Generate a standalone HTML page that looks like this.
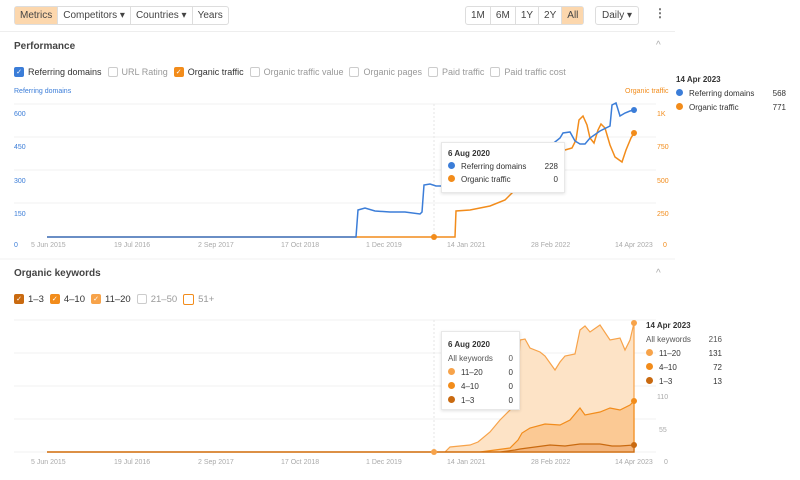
<!DOCTYPE html>
<html><head><meta charset="utf-8"><style>
*{margin:0;padding:0;box-sizing:border-box}
body{width:800px;height:480px;background:#fff;font-family:"Liberation Sans",Arial,sans-serif;color:#333;position:relative;overflow:hidden}
.a{position:absolute;white-space:nowrap}
.btns{display:flex;border:1px solid #ddd;border-radius:3px;height:19px;font-size:10px;color:#444}
.btns div{padding:0 5px;line-height:17px;border-right:1px solid #ddd}
.btns div:last-child{border-right:none}
.on{background:#fcd7ad}
.chk{display:flex;align-items:center;font-size:9px;height:12px}
.chk span{display:flex;align-items:center;margin-right:6px}
.cb{display:block;width:10px;height:10px;border:1px solid #ccc;border-radius:2px;margin-right:4px;font-style:normal;color:#fff;font-size:7px;line-height:9px;text-align:center;overflow:hidden}
.g{color:#999}
.dot{display:inline-block;width:7px;height:7px;border-radius:50%;margin-right:6px}
</style></head><body>
<div class="a btns" style="left:14px;top:6px"><div class="on">Metrics</div><div>Competitors ▾</div><div>Countries ▾</div><div>Years</div></div>
<div class="a btns" style="left:465px;top:6px"><div>1M</div><div>6M</div><div>1Y</div><div>2Y</div><div class="on">All</div></div>
<div class="a btns" style="left:595px;top:6px"><div style="padding:0 6px">Daily ▾</div></div>
<div class="a" style="left:654px;top:6px;font-size:12px;color:#666;font-weight:bold">⋮</div>
<div class="a" style="left:0;top:31px;width:675px;height:1px;background:#eee"></div>
<div class="a" style="left:14px;top:41px;font-size:10px;font-weight:bold;color:#444">Performance</div>
<div class="a" style="left:656px;top:40px;font-size:10px;color:#aaa">^</div>
<div class="a chk" style="left:14px;top:66px">
<span><i class="cb" style="background:#3b7dd8;border-color:#3b7dd8">✓</i>Referring domains</span>
<span class="g"><i class="cb"></i>URL Rating</span>
<span><i class="cb" style="background:#f28c1b;border-color:#f28c1b">✓</i>Organic traffic</span>
<span class="g"><i class="cb"></i>Organic traffic value</span>
<span class="g"><i class="cb"></i>Organic pages</span>
<span class="g"><i class="cb"></i>Paid traffic</span>
<span class="g"><i class="cb"></i>Paid traffic cost</span></div>
<div class="a" style="left:14px;top:88px;font-size:7px;color:#3b7dd8">Referring domains</div>
<div class="a" style="left:625px;top:88px;font-size:7px;color:#f28c1b">Organic traffic</div>

<svg class="a" style="left:0;top:0" width="800" height="480">
<g stroke="#f0f0f0" stroke-width="1">
<line x1="14" y1="104" x2="656" y2="104"/><line x1="14" y1="137" x2="656" y2="137"/><line x1="14" y1="170" x2="656" y2="170"/><line x1="14" y1="203" x2="656" y2="203"/>
<line x1="14" y1="320" x2="656" y2="320"/><line x1="14" y1="353" x2="656" y2="353"/><line x1="14" y1="386" x2="656" y2="386"/><line x1="14" y1="419" x2="656" y2="419"/><line x1="14" y1="452" x2="656" y2="452"/>
<line x1="0" y1="259" x2="675" y2="259"/>
</g>
<line x1="434" y1="104" x2="434" y2="237" stroke="#e6e6e6" stroke-dasharray="2,2"/>
<line x1="434" y1="320" x2="434" y2="452" stroke="#e6e6e6" stroke-dasharray="2,2"/>
<g font-size="7" fill="#3b7dd8"><text x="14" y="116">600</text><text x="14" y="149">450</text><text x="14" y="183">300</text><text x="14" y="216">150</text><text x="14" y="247">0</text></g>
<g font-size="7" fill="#f28c1b"><text x="657" y="116">1K</text><text x="657" y="149">750</text><text x="657" y="183">500</text><text x="657" y="216">250</text><text x="663" y="247">0</text></g>
<g font-size="7" fill="#aaa"><text x="31" y="247">5 Jun 2015</text><text x="114" y="247">19 Jul 2016</text><text x="198" y="247">2 Sep 2017</text><text x="281" y="247">17 Oct 2018</text><text x="366" y="247">1 Dec 2019</text><text x="447" y="247">14 Jan 2021</text><text x="531" y="247">28 Feb 2022</text><text x="615" y="247">14 Apr 2023</text>
<text x="31" y="464">5 Jun 2015</text><text x="114" y="464">19 Jul 2016</text><text x="198" y="464">2 Sep 2017</text><text x="281" y="464">17 Oct 2018</text><text x="366" y="464">1 Dec 2019</text><text x="447" y="464">14 Jan 2021</text><text x="531" y="464">28 Feb 2022</text><text x="615" y="464">14 Apr 2023</text>
<text x="657" y="399">110</text><text x="659" y="432">55</text><text x="664" y="464">0</text></g>
<polyline fill="none" stroke="#f28c1b" stroke-width="1.5" points="47,237 455,237 456,211 470,210 490,206 505,200 515,190 530,175 545,162 555,155 565,150 572,148 576,140 579,120 583,116 587,125 590,138 594,143 598,130 601,124 605,128 610,145 615,157 622,162 626,150 631,138 634,133"/>
<polyline fill="none" stroke="#3b7dd8" stroke-width="1.5" points="47,237 356,237 358,210 365,208 375,211 390,212 405,212 420,214 422,212 424,185 430,184 436,186 450,186 500,170 545,150 560,138 563,133 570,132 575,141 580,144 585,144 590,138 600,131 610,126 612,105 616,103 620,116 625,113 630,111 634,110"/>
<circle cx="434" cy="237" r="3" fill="#f28c1b"/><circle cx="634" cy="110" r="3" fill="#3b7dd8"/><circle cx="634" cy="133" r="3" fill="#f28c1b"/>
<path fill="#fde3c6" stroke="#f7a34a" stroke-width="1.2" d="M47,452 L445,452 450,447 470,445 478,442 490,432 500,420 510,410 517,398 520,340 525,339 530,348 540,352 545,356 555,370 560,362 565,356 575,354 580,330 585,326 590,332 600,325 610,340 620,338 625,350 630,340 634,323 L634,452 Z"/>
<path fill="#fbc994" stroke="#f28c1b" stroke-width="1.2" d="M47,452 L480,452 495,450 510,448 518,440 522,433 530,428 545,424 560,425 570,420 580,408 585,415 600,412 610,408 620,410 630,405 634,401 L634,452 Z"/>
<path fill="#f3b57d" stroke="#c96a10" stroke-width="1.2" d="M47,452 L500,452 515,450 520,449 535,447 550,445 565,446 580,444 600,444 612,446 620,446 634,445 L634,452 Z"/>
<circle cx="434" cy="452" r="3" fill="#f7a34a"/><circle cx="634" cy="323" r="3" fill="#f7a34a"/><circle cx="634" cy="401" r="3" fill="#f28c1b"/><circle cx="634" cy="445" r="3" fill="#c96a10"/>
</svg>

<div class="a" style="left:441px;top:142px;width:124px;height:51px;background:#fff;border:1px solid #e8e8e8;box-shadow:0 1px 3px rgba(0,0,0,.12);font-size:8px;padding:6px 6px">
<div style="font-weight:bold;margin-bottom:4px">6 Aug 2020</div>
<div style="display:flex;justify-content:space-between;margin-bottom:4px"><span><i class="dot" style="background:#3b7dd8"></i>Referring domains</span><span>228</span></div>
<div style="display:flex;justify-content:space-between"><span><i class="dot" style="background:#f28c1b"></i>Organic traffic</span><span>0</span></div></div>

<div class="a" style="left:676px;top:75px;width:110px;font-size:8px">
<div style="font-weight:bold;margin-bottom:5px">14 Apr 2023</div>
<div style="display:flex;justify-content:space-between;margin-bottom:5px"><span><i class="dot" style="background:#3b7dd8"></i>Referring domains</span><span>568</span></div>
<div style="display:flex;justify-content:space-between"><span><i class="dot" style="background:#f28c1b"></i>Organic traffic</span><span>771</span></div></div>

<div class="a" style="left:14px;top:268px;font-size:10px;font-weight:bold;color:#444">Organic keywords</div>
<div class="a" style="left:656px;top:268px;font-size:10px;color:#aaa">^</div>
<div class="a chk" style="left:14px;top:293px;font-size:9.5px">
<span><i class="cb" style="background:#c96a10;border-color:#c96a10">✓</i>1–3</span>
<span><i class="cb" style="background:#f28c1b;border-color:#f28c1b">✓</i>4–10</span>
<span><i class="cb" style="background:#f7a34a;border-color:#f7a34a">✓</i>11–20</span>
<span class="g"><i class="cb"></i>21–50</span>
<span class="g"><i class="cb" style="border:1.5px solid #f28c1b;width:11px;height:11px"></i>51+</span></div>

<div class="a" style="left:441px;top:331px;width:79px;height:79px;background:#fff;border:1px solid #e8e8e8;box-shadow:0 1px 3px rgba(0,0,0,.12);font-size:8px;padding:6px 6px;line-height:14px">
<div style="font-weight:bold">6 Aug 2020</div>
<div style="display:flex;justify-content:space-between;color:#555"><span>All keywords</span><span>0</span></div>
<div style="display:flex;justify-content:space-between"><span><i class="dot" style="background:#f7a34a"></i>11–20</span><span>0</span></div>
<div style="display:flex;justify-content:space-between"><span><i class="dot" style="background:#f28c1b"></i>4–10</span><span>0</span></div>
<div style="display:flex;justify-content:space-between"><span><i class="dot" style="background:#c96a10"></i>1–3</span><span>0</span></div></div>

<div class="a" style="left:646px;top:319px;width:76px;font-size:8px;line-height:14px">
<div style="font-weight:bold">14 Apr 2023</div>
<div style="display:flex;justify-content:space-between;color:#555"><span>All keywords</span><span>216</span></div>
<div style="display:flex;justify-content:space-between"><span><i class="dot" style="background:#f7a34a"></i>11–20</span><span>131</span></div>
<div style="display:flex;justify-content:space-between"><span><i class="dot" style="background:#f28c1b"></i>4–10</span><span>72</span></div>
<div style="display:flex;justify-content:space-between"><span><i class="dot" style="background:#c96a10"></i>1–3</span><span>13</span></div></div>
</body></html>
